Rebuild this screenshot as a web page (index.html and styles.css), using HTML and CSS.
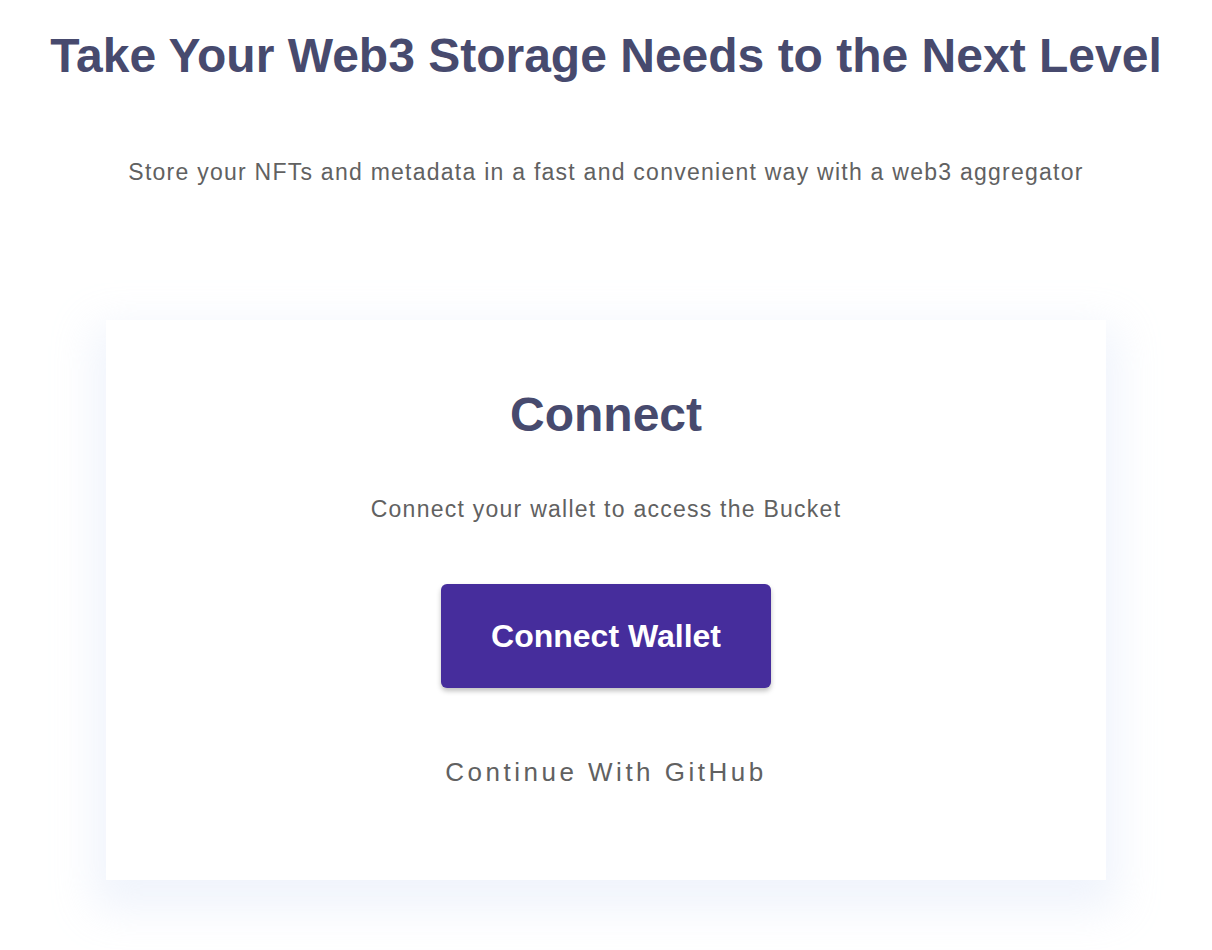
FILE: index.html
```html
<!DOCTYPE html>
<html>
<head>
<meta charset="utf-8">
<link rel="stylesheet" href="styles.css">
</head>
<body>
<main class="page">
  <h1 class="title">Take Your Web3 Storage Needs to the Next Level</h1>
  <p class="subtitle">Store your NFTs and metadata in a fast and convenient way with a web3 aggregator</p>
  <section class="card">
    <h2 class="card-title">Connect</h2>
    <p class="card-text">Connect your wallet to access the Bucket</p>
    <button class="btn-primary">Connect Wallet</button>
    <a class="link-github">Continue With GitHub</a>
  </section>
</main>
</body>
</html>
```

FILE: styles.css
```css
html, body {
  margin: 0;
  padding: 0;
  background: #ffffff;
}
body {
  font-family: "Liberation Sans", Arial, Helvetica, sans-serif;
  width: 1212px;
  overflow: hidden;
}
.page {
  display: flex;
  flex-direction: column;
  align-items: center;
  padding-top: 28px;
  height: 950px;
  box-sizing: border-box;
}
.title {
  margin: 0;
  font-size: 48px;
  font-weight: 700;
  color: #474a6e;
  line-height: 56px;
  text-align: center;
}
.subtitle {
  margin: 0;
  margin-top: 74px;
  font-size: 23px;
  line-height: 28px;
  color: #616161;
  letter-spacing: 1.25px;
  text-align: center;
}
.card {
  margin-top: 134px;
  width: 1000px;
  height: 560px;
  box-sizing: border-box;
  background: #ffffff;
  box-shadow: 0 18px 40px 12px rgba(205, 218, 245, 0.3);
  display: flex;
  flex-direction: column;
  align-items: center;
  padding-top: 67px;
}
.card-title {
  margin: 0;
  font-size: 48px;
  font-weight: 700;
  color: #474a6e;
  line-height: 56px;
}
.card-text {
  margin: 0;
  margin-top: 52px;
  font-size: 23px;
  line-height: 28px;
  color: #616161;
  letter-spacing: 1.25px;
}
.btn-primary {
  margin-top: 61px;
  width: 330px;
  height: 104px;
  border: none;
  border-radius: 6px;
  background: #462d9c;
  color: #ffffff;
  font-family: inherit;
  font-size: 32px;
  font-weight: 700;
  box-shadow: 0 3px 5px rgba(0, 0, 0, 0.25);
  cursor: pointer;
}
.link-github {
  margin-top: 68px;
  font-size: 26px;
  line-height: 32px;
  color: #616161;
  letter-spacing: 3.5px;
  cursor: pointer;
}
```
